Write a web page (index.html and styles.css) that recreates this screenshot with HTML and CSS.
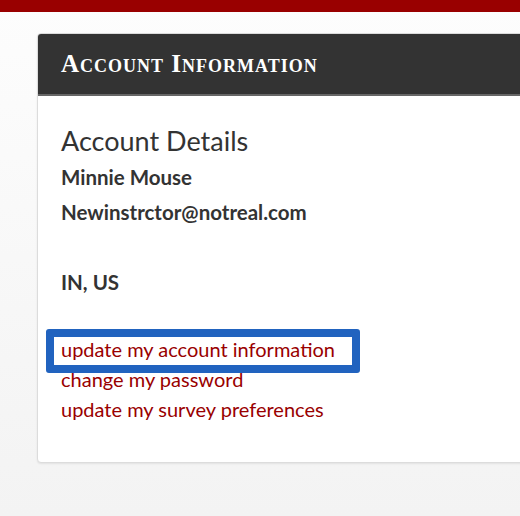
FILE: index.html
```html
<!DOCTYPE html>
<html lang="en">
<head>
    <meta charset="UTF-8">
    <title>Account Information</title>
    <meta name="viewport" content="width=device-width, initial-scale=1.0">
    <link rel="stylesheet" href="styles.css">
</head>
<body>
    <div class="topbar"></div>
    <div class="page">
        <div class="panel">
            <div class="panel-heading">
                <h2>Account Information</h2>
            </div>
            <div class="panel-body">
                <h3>Account Details</h3>
                <p class="detail">Minnie Mouse</p>
                <p class="detail">Newinstrctor@notreal.com</p>
                <p class="detail empty"></p>
                <p class="detail">IN, US</p>
                <ul class="links">
                    <li class="highlighted"><a href="#">update my account information</a></li>
                    <li><a href="#">change my password</a></li>
                    <li><a href="#">update my survey preferences</a></li>
                </ul>
            </div>
        </div>
    </div>
</body>
</html>
```
FILE: styles.css
```css
:root {
    --brand-red: #990000;
    --dark: #333333;
    --text-color: #333;
    --marker: #2163bf;
}

html, body {
    margin: 0;
    height: 100%;
}

body {
    font-family: Lato, 'Noto Sans', sans-serif;
    color: var(--text-color);
    background: linear-gradient(#fdfdfd, #f3f3f3);
    overflow: hidden;
}

.topbar {
    height: 12px;
    background-color: var(--brand-red);
}

.page {
    padding: 21px 0 0 37px;
}

.panel {
    width: 620px;
    height: 428px;
    background-color: white;
    border: 1px solid #dcdcdc;
    border-radius: 4px;
    box-shadow: 0 1px 2px rgba(0, 0, 0, 0.08);
    overflow: hidden;
}

.panel-heading {
    height: 60px;
    background-color: var(--dark);
    border-bottom: 2px solid #666;
    padding-left: 23px;
    display: flex;
    align-items: center;
}

.panel-heading h2 {
    margin: 0;
    font-family: 'Liberation Serif', serif;
    font-variant: small-caps;
    font-weight: bold;
    font-size: 25px;
    letter-spacing: 1px;
    color: white;
}

.panel-body {
    padding: 28px 23px 0 23px;
}

.panel-body h3 {
    margin: 0 0 2px 0;
    font-weight: 400;
    font-size: 27px;
    line-height: 34px;
    color: var(--text-color);
}

.detail {
    margin: 0;
    font-weight: bold;
    font-size: 20.5px;
    line-height: 35px;
    height: 35px;
}

.links {
    list-style: none;
    margin: 34px 0 0 0;
    padding: 0;
}

.links li {
    font-size: 20px;
    line-height: 30px;
}

.links a {
    color: var(--brand-red);
    text-decoration: none;
}

.highlighted {
    position: relative;
}

.highlighted::before {
    content: '';
    position: absolute;
    left: -15px;
    top: -5px;
    width: 298px;
    height: 28px;
    border: 8px solid var(--marker);
    border-radius: 3px;
}
```
